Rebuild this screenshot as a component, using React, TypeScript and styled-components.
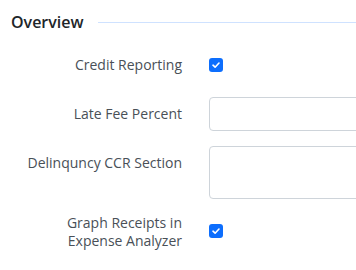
import styled, { createGlobalStyle } from 'styled-components';

const GlobalStyle = createGlobalStyle`
    html, body {
        margin: 0;
        padding: 0;
        background: #ffffff;
        overflow: hidden;
    }
    body {
        font-family: 'Open Sans', 'Liberation Sans', sans-serif;
        color: #212529;
    }
`;

const Page = styled.div`
    width: 356px;
    height: 270px;
    overflow: hidden;
    padding: 11px 0 0 11px;
    box-sizing: border-box;
`;

const SectionHead = styled.div`
    display: flex;
    align-items: center;
    gap: 14px;
    height: 22px;

    h2 {
        margin: 0;
        font-size: 16px;
        font-weight: 600;
        color: #212529;
        white-space: nowrap;
    }
`;

const Rule = styled.div`
    flex: 1;
    height: 1px;
    background: #cfe2ff;
`;

const Form = styled.div`
    display: grid;
    grid-template-columns: 171px 320px;
    column-gap: 27px;
    row-gap: 15px;
    margin-top: 15px;
`;

const Label = styled.label<{ $center?: boolean }>`
    font-size: 14px;
    line-height: 18px;
    color: #495057;
    text-align: right;
    white-space: nowrap;
    align-self: ${(p) => (p.$center ? 'center' : 'start')};
    padding-top: ${(p) => (p.$center ? '0' : '8px')};
`;

const CheckCell = styled.div`
    height: 34px;
    display: flex;
    align-items: center;
`;

const Check = styled.span`
    width: 14px;
    height: 14px;
    border-radius: 3px;
    background: #0d6efd;
    display: flex;
    align-items: center;
    justify-content: center;
`;

const Input = styled.div<{ $tall?: boolean }>`
    height: ${(p) => (p.$tall ? '53px' : '34px')};
    border: 1px solid #ced4da;
    border-radius: 4px;
    box-sizing: border-box;
    background: #ffffff;
`;

function Checkbox() {
    return (
        <Check>
            <svg width="10" height="10" viewBox="0 0 10 10">
                <path
                    d="M2 5.2 L4.1 7.2 L8 3"
                    fill="none"
                    stroke="#ffffff"
                    strokeWidth="1.6"
                    strokeLinecap="round"
                    strokeLinejoin="round"
                />
            </svg>
        </Check>
    );
}

export default function App() {
    return (
        <Page>
            <GlobalStyle />
            <SectionHead>
                <h2>Overview</h2>
                <Rule />
            </SectionHead>
            <Form>
                <Label $center>Credit Reporting</Label>
                <CheckCell>
                    <Checkbox />
                </CheckCell>

                <Label>Late Fee Percent</Label>
                <Input />

                <Label>Delinquncy CCR Section</Label>
                <Input $tall />

                <Label $center>
                    Graph Receipts in
                    <br />
                    Expense Analyzer
                </Label>
                <CheckCell>
                    <Checkbox />
                </CheckCell>
            </Form>
        </Page>
    );
}
